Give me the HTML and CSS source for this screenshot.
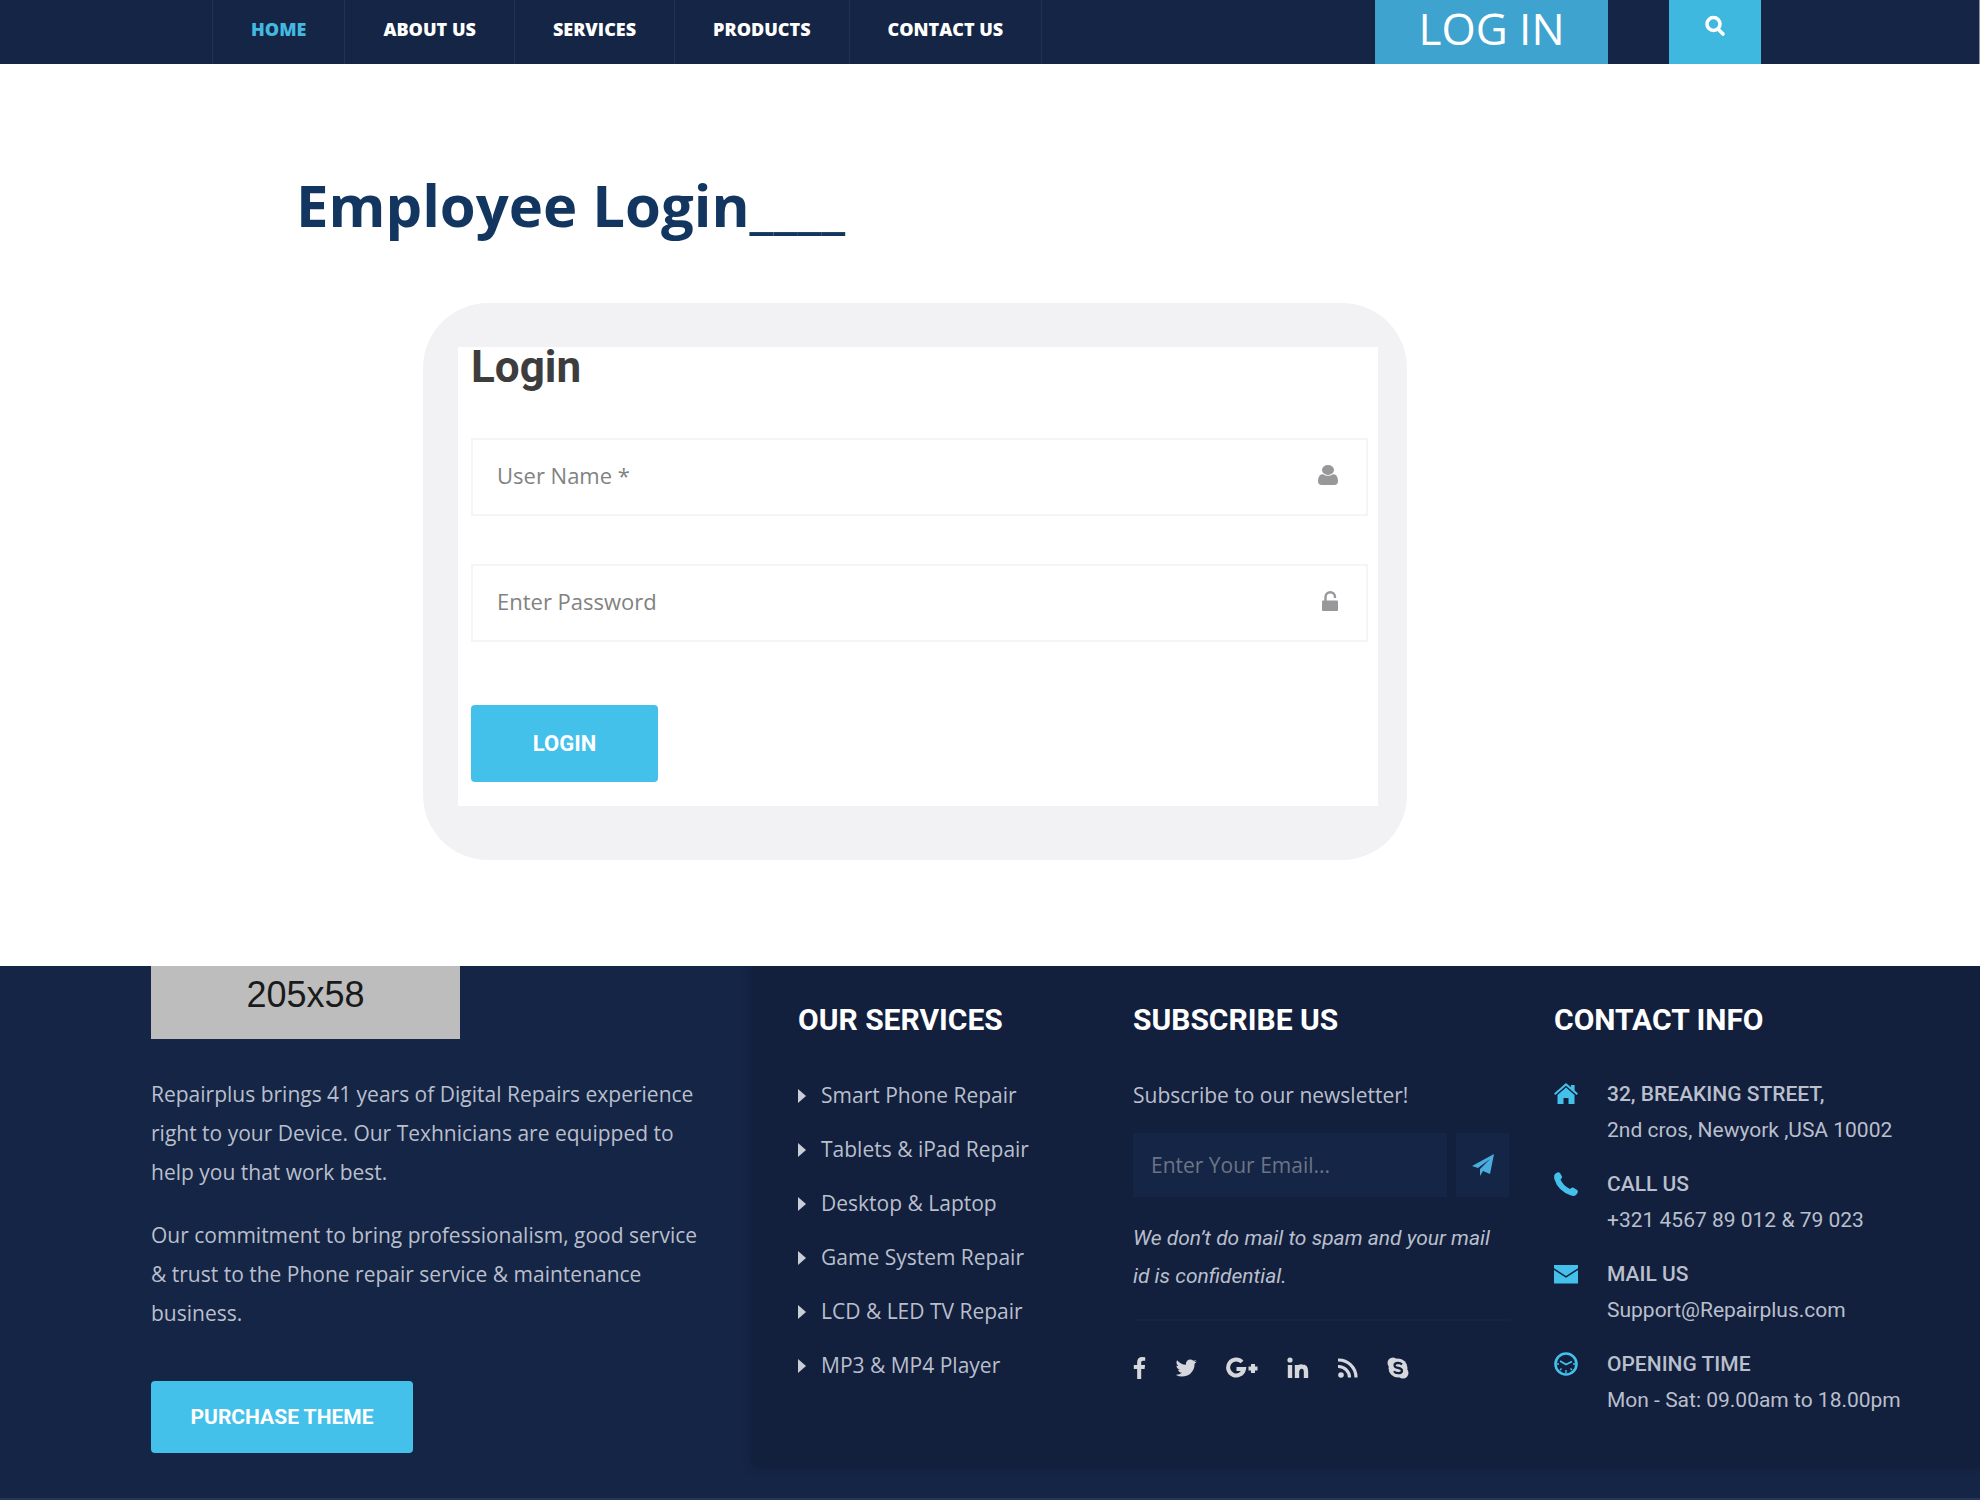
FILE: index.html
```html
<!DOCTYPE html>
<html lang="en">
<head>
<meta charset="utf-8">
<meta name="viewport" content="width=device-width, initial-scale=1">
<title>Employee Login</title>
<link rel="stylesheet" href="styles.css">
</head>
<body>
<header class="topbar">
  <nav class="menu" aria-label="Main">
    <a class="menu-link active" href="#">HOME</a>
    <a class="menu-link" href="#">ABOUT US</a>
    <a class="menu-link" href="#">SERVICES</a>
    <a class="menu-link" href="#">PRODUCTS</a>
    <a class="menu-link" href="#">CONTACT US</a>
  </nav>
  <div class="actions">
    <button class="nav-login" type="button">LOG IN</button>
    <button class="nav-search" type="button" aria-label="Search">
      <svg width="22" height="22" viewBox="0 0 22 22" fill="none" stroke="currentColor"><ellipse cx="9.500" cy="9" rx="6.500" ry="6.500" stroke-width="3.600"/><path d="M14.500 14.500l4.500 4.500" stroke-width="3.600" stroke-linecap="round"/></svg>
    </button>
  </div>
</header>

<main class="main">
  <h1 class="title">Employee Login____</h1>
  <section class="card">
    <form class="form">
      <h2 class="form-title">Login</h2>
      <div class="field">
        <input class="field-input" type="text" placeholder="User Name *" aria-label="User Name">
        <svg width="20" height="20" viewBox="256 128 1280 1536" preserveAspectRatio="none" fill="currentColor"><path d="M1536 1399q0 109-62.500 187t-150.500 78h-854q-88 0-150.500-78t-62.500-187q0-85 8.500-160.500t31.500-152 58.500-131 94-89 134.500-34.500q131 128 313 128t313-128q76 0 134.500 34.500t94 89 58.500 131 31.500 152 8.500 160.500zm-256-887q0 159-112.500 271.500t-271.500 112.500-271.500-112.500-112.500-271.500 112.500-271.500 271.500-112.500 271.500 112.500 112.500 271.500z"/></svg>
      </div>
      <div class="field">
        <input class="field-input" type="password" placeholder="Enter Password" aria-label="Password">
        <svg width="20" height="20" viewBox="0 0 20 20"><rect x="4" y="9.500" width="16" height="10.500" rx="1" fill="currentColor"/><path d="M7.500 10V6a4.700 4.700 0 0 1 9.500 0v1" fill="none" stroke="currentColor" stroke-width="2.400"/></svg>
      </div>
      <button class="btn btn-login" type="submit">LOGIN</button>
    </form>
  </section>
</main>

<footer class="footer">
  <section class="brand">
    <div class="logo">205x58</div>
    <p class="brand-text">Repairplus brings 41 years of Digital Repairs experience<br>right to your Device. Our Texhnicians are equipped to<br>help you that work best.</p>
    <p class="brand-text">Our commitment to bring professionalism, good service<br>&amp; trust to the Phone repair service &amp; maintenance<br>business.</p>
    <button class="btn btn-purchase" type="button">PURCHASE THEME</button>
  </section>
  <div class="panel">
    <section>
      <h3 class="heading">OUR SERVICES</h3>
      <ul class="services">
        <li><a href="#">Smart Phone Repair</a></li>
        <li><a href="#">Tablets &amp; iPad Repair</a></li>
        <li><a href="#">Desktop &amp; Laptop</a></li>
        <li><a href="#">Game System Repair</a></li>
        <li><a href="#">LCD &amp; LED TV Repair</a></li>
        <li><a href="#">MP3 &amp; MP4 Player</a></li>
      </ul>
    </section>
    <section class="subscribe">
      <h3 class="heading">SUBSCRIBE US</h3>
      <p class="lead">Subscribe to our newsletter!</p>
      <form class="newsletter">
        <input class="email" type="email" placeholder="Enter Your Email..." aria-label="Email">
        <button class="send" type="submit" aria-label="Subscribe">
          <svg width="22" height="22" viewBox="0 0 22 22" fill="currentColor"><path d="M22 0L18 20l-7-3-3 5v-7L18 5 6 14 0 12z"/></svg>
        </button>
      </form>
      <p class="note">We don’t do mail to spam and your mail<br>id is confidential.</p>
      <div class="social">
        <a href="#" aria-label="Facebook"><svg width="13" height="22" viewBox="479 0 864 1664" fill="currentColor"><path d="M1343 12v264h-157q-86 0-116 36t-30 108v189h293l-39 296h-254v759h-306v-759h-255v-296h255v-218q0-186 104-288.500t277-102.500q147 0 228 12z"/></svg></a>
        <a href="#" aria-label="Twitter"><svg width="22" height="22" viewBox="64 196 1640 1400" fill="currentColor"><path d="M1684 408q-67 98-162 167 1 14 1 42 0 130-38 259.500t-115.500 248.500-184.500 210.500-258 146-323 54.500q-271 0-496-145 35 4 78 4 225 0 401-138-105-2-188-64.500t-114-159.500q33 5 61 5 43 0 85-11-112-23-185.500-111.500t-73.500-205.500v-4q68 38 146 41-66-44-105-115t-39-154q0-88 44-163 121 149 294.500 238.500t371.500 99.500q-8-38-8-74 0-134 94.500-228.500t228.500-94.500q140 0 236 102 109-21 205-78-37 115-142 178 93-10 186-50z"/></svg></a>
        <a href="#" aria-label="Google Plus"><svg width="32" height="22" viewBox="0 0 32 22" fill="none" stroke="currentColor" stroke-width="4"><path d="M16 5A8 8 0 1 0 18 12H10.500M27 7v9M22.500 11.500h9"/></svg></a>
        <a href="#" aria-label="LinkedIn"><svg width="22" height="22" viewBox="0 0 22 22"><circle cx="3" cy="3" r="2.600" fill="currentColor"/><path d="M3 8v13M10 8v13M10 14q1-5 5-4.500 4 0 4 5V21" fill="none" stroke="currentColor" stroke-width="4.400"/></svg></a>
        <a href="#" aria-label="RSS"><svg width="20" height="22" viewBox="0 0 20 22"><circle cx="3" cy="18" r="2.800" fill="currentColor"/><path d="M0 9.500A11 11 0 0 1 11.500 20.500M0 3A17.500 17.500 0 0 1 18 20.500" fill="none" stroke="currentColor" stroke-width="3.200"/></svg></a>
        <a href="#" aria-label="Skype"><svg width="22" height="22" viewBox="0 0 22 22"><g fill="currentColor"><circle cx="11" cy="11" r="9.500"/><circle cx="6" cy="6" r="5.500"/><circle cx="16" cy="16" r="5.500"/></g><path d="M15 7.500Q13.500 5.800 11 5.800 7.500 6 7.500 8.200q0 2 3.500 2.600 4 .700 4 3-.200 2.400-3.800 2.400-3 0-4.200-2" fill="none" stroke="#121f3d" stroke-width="2.200"/></svg></a>
      </div>
    </section>
    <section>
      <h3 class="heading">CONTACT INFO</h3>
      <ul class="contacts">
        <li class="contact">
          <svg width="24" height="24" viewBox="0 0 24 24" fill="currentColor"><path d="M12 1l5 4.300V3h3.600v5.500L24 11.500l-1.300 1.500L12 3.800 1.300 13 0 11.500z"/><path d="M3.500 13L12 5.500l8.500 7.500v9h-6v-6h-5v6h-6z"/></svg>
          <p><strong>32, BREAKING STREET,</strong><br>2nd cros, Newyork ,USA 10002</p>
        </li>
        <li class="contact">
          <svg width="24" height="24" viewBox="0 0 24 24" fill="currentColor"><path d="M1 2Q4-1 6 1l2 3.500q.500 1.500-1.500 3 2.500 6 9.500 9.500 1.500-2 3-1.500l4.200 2.500Q25 20 22 23q-2 1.500-5 .500Q4 19 .5 7.500-.5 4 1 2z"/></svg>
          <p><strong>CALL US</strong><br>+321 4567 89 012 &amp; 79 023</p>
        </li>
        <li class="contact">
          <svg width="24" height="24" viewBox="0 0 24 24" fill="currentColor"><path d="M0 3h24v3.200L12 14 0 6.200z"/><path d="M0 8l12 7.800L24 8v13.500H0z"/></svg>
          <p><strong>MAIL US</strong><br>Support@Repairplus.com</p>
        </li>
        <li class="contact">
          <svg width="24" height="24" viewBox="0 0 24 24" fill="none" stroke="currentColor"><circle cx="12" cy="12" r="10.500" stroke-width="2.600"/><path d="M6 9l6 3.500L18 9.500" stroke-width="1.800"/><path d="M12 18v3M3 12h2M19 12h2M6 18l1.500-1.500M18 18l-1.500-1.500" stroke-width="1.400"/></svg>
          <p><strong>OPENING TIME</strong><br>Mon - Sat: 09.00am to 18.00pm</p>
        </li>
      </ul>
    </section>
  </div>
</footer>
</body>
</html>
```
FILE: styles.css
```css
* { box-sizing: border-box; }

body {
  margin: 0;
  background: #fff;
  font-family: "Open Sans", sans-serif;
  font-size: 21px;
}

h1, h2, h3, p, ul { margin: 0; padding: 0; }
ul { list-style: none; }
a { color: inherit; text-decoration: none; }
button { border: 0; padding: 0; cursor: pointer; font-family: inherit; }
svg { display: block; flex: none; }

/* top bar */
.topbar {
  display: flex;
  justify-content: space-between;
  height: 64px;
  padding: 0 218px 0 212px;
  background: #152545;
  border-right: 1px solid #8a90a0;
}

.menu {
  display: flex;
  border-right: 1px solid #213253;
}

.menu-link {
  padding: 0 38px;
  border-left: 1px solid #213253;
  color: #fff;
  font-size: 18px;
  font-weight: 800;
  line-height: 58px;
}

.menu-link.active { color: #43b8e0; }

.actions { display: flex; gap: 61px; }

.nav-login {
  width: 233px;
  padding-bottom: 8px;
  background: #3ea3cf;
  color: #fff;
  font-size: 44px;
  font-weight: 400;
  line-height: 56px;
}

.nav-search {
  display: flex;
  justify-content: center;
  width: 92px;
  padding-top: 15px;
  background: #3eb8de;
  color: #fff;
}

/* login area */
.main {
  display: grid;
  grid-template-columns: 423fr 984fr 573fr;
  padding: 101px 0 106px;
}

.title {
  grid-column: 1 / -1;
  padding-left: 296px;
  color: #12365f;
  font-size: 58px;
  font-weight: 700;
  line-height: 80px;
}

.card {
  grid-column: 2;
  margin-top: 58px;
  padding: 44px 29px 54px 35px;
  border-radius: 65px;
  background: #f2f2f5;
}

.form {
  display: grid;
  gap: 48px;
  padding: 0 10px 24px 13px;
  background: #fff;
}

.form-title {
  margin-bottom: 3px;
  color: #3d3d3d;
  font-family: Roboto, sans-serif;
  font-size: 44px;
  font-weight: 700;
  line-height: 40px;
}

.field {
  display: flex;
  align-items: center;
  height: 78px;
  padding: 0 28px 4px 24px;
  border: 2px solid #f5f5f6;
  color: #98989b;
}

.field-input {
  flex: 1;
  min-width: 0;
  padding: 0;
  border: 0;
  outline: 0;
  background: none;
  font: 22px "Open Sans", sans-serif;
}

.field-input::placeholder { color: #828282; }

.btn {
  border-radius: 4px;
  background: #43c1ea;
  color: #fff;
  font-family: Roboto, sans-serif;
  font-size: 22px;
  font-weight: 700;
}

.btn-login { width: 187px; height: 77px; margin-top: 15px; }

/* footer */
.footer {
  display: grid;
  grid-template-columns: 753fr 1227fr;
  padding-bottom: 31px;
  border-bottom: 2px solid #26365a;
  background: #152545;
  color: #b9bfcc;
}

.brand { padding: 0 0 14px 151px; }

.logo {
  width: 309px;
  height: 73px;
  margin-bottom: 36px;
  background: #bdbdbd;
  color: #1a1a1a;
  font-family: "Liberation Sans", sans-serif;
  font-size: 36px;
  line-height: 58px;
  text-align: center;
}

.brand-text {
  margin-bottom: 24px;
  line-height: 39px;
  white-space: nowrap;
}

.btn-purchase {
  width: 262px;
  height: 72px;
  margin-top: 24px;
  font-size: 21px;
}

.panel {
  display: grid;
  grid-template-columns: 335fr 421fr 426fr;
  padding: 34px 0 0 45px;
  background: #121f3d;
  box-shadow: 0 0 8px #101c38;
  clip-path: inset(0 0 -12px -12px);
}

.heading {
  margin-bottom: 36px;
  color: #fff;
  font-family: Roboto, sans-serif;
  font-size: 30px;
  font-weight: 700;
  line-height: 40px;
}

.services { display: grid; gap: 15px; }

.services li {
  display: flex;
  align-items: center;
  gap: 15px;
  line-height: 39px;
}

.services li::before {
  content: "";
  border: solid transparent;
  border-width: 7px 0 7px 8px;
  border-left-color: #c8cdd8;
}

.subscribe { padding-right: 45px; }

.lead { margin-bottom: 18px; line-height: 39px; }

.newsletter { display: flex; gap: 9px; margin-bottom: 22px; }

.email {
  flex: 1;
  min-width: 0;
  height: 64px;
  padding: 0 18px;
  border: 0;
  background: #152545;
  color: #b9bfcc;
  font: 21px "Open Sans", sans-serif;
}

.email::placeholder { color: #6c7487; }

.send {
  display: grid;
  place-items: center;
  width: 53px;
  background: #152545;
  color: #4badde;
}

.note {
  padding-bottom: 24px;
  border-bottom: 2px solid #16243f;
  font-family: Roboto, sans-serif;
  font-style: italic;
  line-height: 38px;
}

.social {
  display: flex;
  gap: 29px;
  margin-top: 36px;
  color: #d5d7dc;
}

.contacts {
  display: grid;
  gap: 18px;
  font-family: Roboto, sans-serif;
  line-height: 36px;
}

.contact { display: flex; gap: 29px; white-space: nowrap; }
.contact svg { margin-top: 6px; color: #43c1ea; }
.contact strong { font-weight: 500; }
```
